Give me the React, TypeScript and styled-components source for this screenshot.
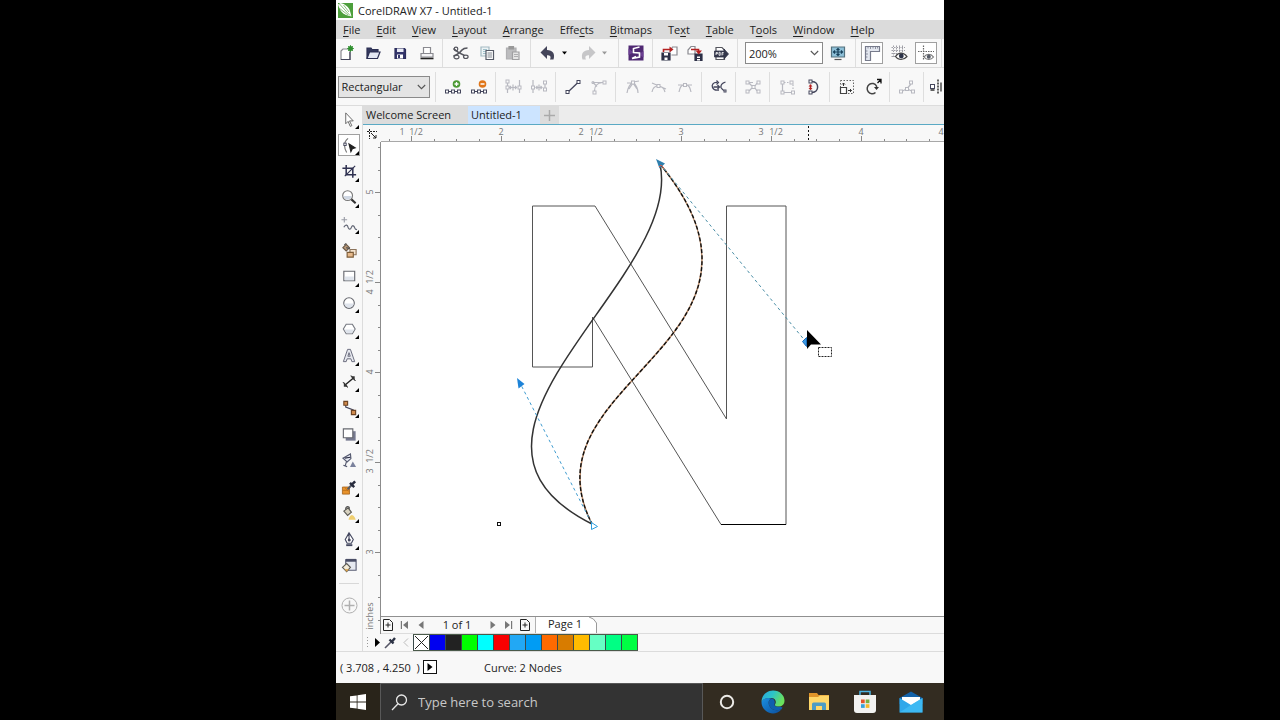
import React from "react";
import styled, { createGlobalStyle } from "styled-components";

const GlobalStyle = createGlobalStyle`
  * { box-sizing: border-box; }
  body {
    margin: 0;
    background: #000;
    font-family: "Open Sans", "Noto Sans", sans-serif;
    font-size: 11px;
    color: #222;
  }
  button, input, select { font: inherit; color: inherit; margin: 0; }
`;

const Stage = styled.div`
  display: flex;
  justify-content: center;
  min-height: 100vh;
  background: #000;
`;

const Screen = styled.main`
  display: flex;
  flex-direction: column;
  width: 47.5%;
  background: #f8f8f8;
  overflow: hidden;
`;

const TitleBar = styled.header`
  display: flex;
  align-items: center;
  gap: 5px;
  height: 20px;
  padding-left: 2px;
  background: #fff;
  white-space: nowrap;
`;

const MenuBar = styled.nav`
  display: flex;
  align-items: center;
  gap: 16px;
  height: 19px;
  padding-left: 7px;
  background: #dbdbdb;
`;

const MenuItem = styled.button`
  flex: none;
  padding: 0;
  border: 0;
  background: none;
  line-height: 16px;
  u { text-underline-offset: 2px; }
`;

const Toolbar = styled.div<{ $height: number }>`
  display: flex;
  align-items: center;
  height: ${(p) => p.$height}px;
  border-bottom: 1px solid #dcdcdc;
  background: #f8f8f8;
  overflow: hidden;
`;

const Group = styled.div<{ $width: number; $gap?: number; $end?: number }>`
  display: flex;
  flex: none;
  align-items: center;
  justify-content: center;
  gap: ${(p) => p.$gap ?? 6}px;
  width: ${(p) => p.$width}px;
  height: 30px;
  padding-right: ${(p) => p.$end ?? 0}px;
  border-right: 1px solid #dedede;
`;

const ToolButton = styled.button<{ $boxed?: boolean; $width?: number; $faded?: boolean }>`
  display: flex;
  flex: none;
  align-items: center;
  justify-content: center;
  width: ${(p) => p.$width ?? 20}px;
  height: 22px;
  padding: 0;
  border: 1px solid ${(p) => (p.$boxed ? "#a0a0a0" : "transparent")};
  background: ${(p) => (p.$boxed ? "#fff" : "none")};
  opacity: ${(p) => (p.$faded ? 0.35 : 1)};
  svg { flex: none; display: block; }
`;

const Split = styled.div`
  display: flex;
`;

const SelectWrap = styled.label<{ $width: number; $bg: string }>`
  display: flex;
  flex: none;
  align-items: center;
  width: ${(p) => p.$width}px;
  height: 22px;
  padding-right: 3px;
  border: 1px solid #8a8a8a;
  background: ${(p) => p.$bg};
  select {
    flex: 1;
    min-width: 0;
    height: 20px;
    padding: 0 0 0 3px;
    border: 0;
    outline: 0;
    background: none;
    appearance: none;
  }
`;

const Work = styled.div`
  display: flex;
  flex: 1;
  min-height: 0;
`;

const ToolBox = styled.aside`
  flex: none;
  width: 27px;
  border-right: 1px solid #dcdcdc;
`;

const ToolList = styled.div`
  display: grid;
  grid-auto-rows: 1fr;
  align-items: center;
  justify-items: center;
  height: 473px;
`;

const ToolCell = styled.button<{ $active?: boolean }>`
  position: relative;
  display: flex;
  align-items: center;
  justify-content: center;
  width: 22px;
  height: 22px;
  padding: 0;
  border: 1px solid ${(p) => (p.$active ? "#a0a0a0" : "transparent")};
  background: ${(p) => (p.$active ? "#fff" : "none")};
`;

const Flyout = styled.i`
  position: absolute;
  right: 0;
  bottom: 0;
  border: 2px solid transparent;
  border-right-color: #000;
  border-bottom-color: #000;
`;

const AddTool = styled.div`
  display: flex;
  justify-content: center;
  margin: 4px 3px 0;
  padding-top: 13px;
  border-top: 1px solid #d8d8d8;
`;

const Doc = styled.section`
  display: flex;
  flex: 1;
  flex-direction: column;
  min-width: 0;
`;

const Tabs = styled.div`
  display: flex;
  height: 19px;
  background: #ececec;
  border-bottom: 1px solid #5aa9c4;
`;

const Tab = styled.button<{ $width: number; $active?: boolean }>`
  width: ${(p) => p.$width}px;
  padding: 0 0 0 3px;
  border: 0;
  text-align: left;
  line-height: 18px;
  white-space: nowrap;
  background: ${(p) => (p.$active ? "#cce4ff" : "#dcdcdc")};
`;

const NewTab = styled.button`
  display: flex;
  align-items: center;
  justify-content: center;
  width: 19px;
  padding: 0;
  border: 0;
  background: #dcdcdc;
`;

const Board = styled.div`
  display: grid;
  flex: 1;
  grid-template-columns: 18px 1fr;
  grid-template-rows: 17px 1fr;
  min-height: 0;
`;

const Corner = styled.div`
  display: flex;
  align-items: center;
  justify-content: center;
`;

const RulerTop = styled.div`
  min-width: 0;
  overflow: hidden;
  border-bottom: 1px solid #a8a8a8;
  svg { display: block; }
`;

const RulerSide = styled.div`
  overflow: hidden;
  border-right: 1px solid #8c8c8c;
  svg { display: block; }
`;

const CanvasColumn = styled.div`
  display: flex;
  flex-direction: column;
  min-width: 0;
`;

const Canvas = styled.div`
  flex: 1;
  background: #fff;
  overflow: hidden;
  svg { display: block; }
`;

const PageNav = styled.div`
  display: flex;
  height: 18px;
  border-top: 1px solid #909090;
  border-bottom: 1px solid #dcdcdc;
`;

const NavButton = styled.button<{ $width: number }>`
  display: flex;
  flex: none;
  align-items: center;
  justify-content: center;
  width: ${(p) => p.$width}px;
  padding: 0;
  border: 0;
  background: none;
`;

const PageCount = styled.span`
  width: 56px;
  text-align: center;
  line-height: 16px;
`;

const PageTab = styled.button`
  display: flex;
  align-items: stretch;
  justify-content: space-between;
  width: 62px;
  margin-left: 2px;
  padding: 0 0 0 12px;
  border: 0;
  border-left: 1px solid #b0b0b0;
  background: #fff;
  line-height: 13px;
  white-space: nowrap;
`;

const Palette = styled.div`
  display: flex;
  align-items: center;
  height: 17px;
`;

const Swatches = styled.div`
  display: flex;
  border: 1px solid #4a5a4a;
  border-left: 0;
`;

const Swatch = styled.button<{ $color: string }>`
  display: block;
  width: 16px;
  height: 15px;
  padding: 0;
  border: 0;
  border-left: 1px solid #3a4a4a;
  background: ${(p) => p.$color};
  svg { display: block; }
`;

const StatusBar = styled.footer`
  display: flex;
  align-items: center;
  height: 32px;
  padding: 0 0 1px 4px;
  border-top: 1px solid #dcdcdc;
  white-space: nowrap;
`;

const Coordinates = styled.span`
  width: 83px;
`;

const PlayButton = styled.button`
  display: flex;
  align-items: center;
  justify-content: center;
  width: 14px;
  height: 14px;
  margin-right: 47px;
  padding: 0;
  border: 1px solid #111;
  background: #fff;
`;

const TaskBar = styled.div`
  display: flex;
  flex: none;
  height: 38px;
  background: #332c21;
`;

const StartButton = styled.button`
  display: flex;
  flex: none;
  align-items: center;
  justify-content: center;
  width: 44px;
  padding: 0;
  border: 0;
  background: #29241a;
`;

const SearchBox = styled.label`
  display: flex;
  align-items: center;
  gap: 10px;
  width: 323px;
  margin-right: 1px;
  padding-left: 10px;
  border: 1px solid #585858;
  background: #333;
  input {
    flex: 1;
    min-width: 0;
    padding: 0;
    border: 0;
    outline: 0;
    background: none;
    font-size: 13px;
  }
  input::placeholder { color: #c8c8c8; opacity: 1; }
`;

const TaskButton = styled.button`
  display: flex;
  flex: none;
  align-items: center;
  justify-content: center;
  width: 46px;
  padding: 0;
  border: 0;
  background: none;
`;

const INK = "#44465c";
const GREY = "#8a8a90";

const Icon = ({ size = 18, children }: { size?: number; children: React.ReactNode }) => (
  <svg width={size} height={size} viewBox="0 0 18 18" fill="none" stroke={INK} strokeWidth="1.2" aria-hidden="true">
    {children}
  </svg>
);

const Chevron = ({ color = "#555" }: { color?: string }) => (
  <svg width="9" height="6" viewBox="0 0 9 6" fill="none" stroke={color} strokeWidth="1.1">
    <path d="M.8 1l3.700 3.700L8.200 1" />
  </svg>
);

const node = (x: number, y: number, s = 3) => (
  <rect x={x} y={y} width={s} height={s} fill="#fff" strokeWidth="1" />
);

const icons: Record<string, React.ReactNode> = {
  new: (
    <>
      <path d="M4 7l2-2h7v10.500H4z" fill="#fff" stroke={GREY} />
      <path d="M4 15.500h9V8" stroke={INK} />
      <circle cx="13.500" cy="4.500" r="2.500" fill="#2f8f2f" stroke="none" />
      <path d="M13.500 1v7M10 4.500h7M11 2l5 5M16 2l-5 5" stroke="#2f8f2f" strokeWidth=".8" />
    </>
  ),
  open: (
    <>
      <path d="M3 14.500V4h4l1 1.500h6V8" fill="#34395e" stroke="#2c3054" />
      <path d="M3 14.500L5.500 8H16l-2.500 6.500z" fill="#e4e8f4" stroke="#2c3054" />
    </>
  ),
  save: (
    <>
      <path d="M4 4.500h9.500l1 1V14.500H4z" fill="#34366c" stroke="#2c2e5c" />
      <path d="M6 4.500h6.500V8H6z" fill="#e8eaf4" stroke="none" />
      <path d="M6 10.500h6v4H6z" fill="#fff" stroke="none" />
      <path d="M7 11h2v3H7z" fill="#34366c" stroke="none" />
    </>
  ),
  print: (
    <>
      <path d="M5.500 9V3.500h7V9" fill="#fff" stroke={GREY} />
      <path d="M3 9.500h12V13H3z" fill="#f4f4f6" stroke={GREY} />
      <path d="M2.500 14.500h13" stroke="#222" strokeWidth="1.600" />
    </>
  ),
  cut: (
    <>
      <path d="M1.500 4.500c4 4 6 5 11 7M1.500 12c4-1 6-3 8.500-6 1.500-1.800 3-2 5.500-2" stroke="#55565e" strokeWidth="1.700" />
      <circle cx="4" cy="5" r="1.800" stroke="#55565e" />
      <ellipse cx="4.500" cy="13" rx="2.500" ry="1.800" stroke="#55565e" />
      <ellipse cx="13.800" cy="12.800" rx="2.300" ry="1.700" stroke="#55565e" />
    </>
  ),
  copy: (
    <>
      <path d="M3 3h8v9H3z" fill="#eef4f6" stroke="#a3b9c2" />
      <path d="M5 5.500h4M5 7.500h3M5 9.500h3" stroke="#8cb4c0" strokeWidth=".8" />
      <path d="M8 6.500h7.500v9H8z" fill="#fff" stroke="#555a66" />
      <path d="M9.500 9h4.500M9.500 11h4.500M9.500 13h4.500" stroke="#6f7680" strokeWidth=".9" />
    </>
  ),
  paste: (
    <>
      <path d="M2.500 4H12v11H2.500z" fill="#bcbcbe" stroke="#b0b0b2" />
      <path d="M5 2.500h4.500V5H5z" fill="#999" stroke="#999" />
      <path d="M8.500 8H15v7.500H8.500z" fill="#e6e6e6" stroke="#a0a0a2" />
      <path d="M10 10.500h4M10 12.500h4" stroke="#a0a0a2" strokeWidth=".8" />
    </>
  ),
  undo: (
    <>
      <path d="M7 6c6-.5 9.500 3 7.500 9.500h-3.500c1.500-3.500 0-4.500-4-4.300z" fill="#44455a" stroke="none" />
      <path d="M8 2v13L1.500 8.500z" fill="#44455a" stroke="none" />
    </>
  ),
  redo: (
    <>
      <path d="M11 6C5 5.500 1.500 9 3.500 15.500H7C5.500 12 7 11 11 11.200z" fill="#c6c6c8" stroke="none" />
      <path d="M10 2v13l6.500-6.500z" fill="#c6c6c8" stroke="none" />
    </>
  ),
  connect: (
    <>
      <path d="M1.500 1.500h15v15h-15z" fill="#4f2872" stroke="none" />
      <path d="M1.500 11l5-2.500-5-4zM16.500 7l-5 3.500 5 3z" fill="#6b3f92" stroke="none" />
      <path d="M12.500 3L6.500 4.500v4l6 .500v4L5 14.500M9 12.500l-4 2" stroke="#fff" strokeWidth="1.600" />
    </>
  ),
  import: (
    <>
      <path d="M10 7.500l2.500-4.500h4.500v8h-5.500" fill="#fff" stroke={GREY} />
      <path d="M2 9h8v7H2z" fill="#2d3047" stroke="#2d3047" />
      <path d="M4 9h4v2.500H4zM4.500 13.500h3V16h-3z" fill="#fff" stroke="none" />
      <path d="M3.500 8V5.500h7" stroke="#b42020" strokeWidth="1.600" />
      <path d="M9.500 2.500v6l4-3z" fill="#b42020" stroke="none" />
    </>
  ),
  export: (
    <>
      <path d="M2 10V6L5 2.500h4V10z" fill="#fff" stroke={GREY} />
      <path d="M9 10h7v6.500H9z" fill="#2d3047" stroke="#2d3047" />
      <path d="M11 12.500h3v1.500h-3zM11 15h3v1.500h-3z" fill="#fff" stroke="none" />
      <path d="M5 5.500h7.500V7" stroke="#b42020" strokeWidth="1.600" />
      <path d="M9.500 6.500h6.500L12.700 10.500z" fill="#b42020" stroke="none" />
    </>
  ),
  pdf: (
    <>
      <path d="M4 15.500V3.500h6l2.500 2.500v9.500z" fill="#fff" stroke="#55565e" />
      <path d="M2.500 7H12V5l4.500 5-4.500 5v-2H2.500z" fill="#33364a" stroke="#33364a" strokeWidth=".8" />
      <path d="M4 11V8.500h1.500v1.200H4M7 8.300v3h1.200V8.300zM10 11.500v-3h1.700M10 10h1.500" stroke="#fff" strokeWidth=".8" />
    </>
  ),
  fullscreen: (
    <>
      <path d="M2.500 3h13v10h-13z" fill="#8ec0d8" stroke="#55727f" />
      <path d="M9 4.500v7M4.500 8h9M7.500 6L9 4.500 10.500 6M7.500 10L9 11.500l1.500-1.500M6 6.500L4.500 8 6 9.500M12 6.500L13.500 8 12 9.500" stroke="#17405a" />
      <path d="M5.500 15.500h7" stroke="#555" />
    </>
  ),
  rulers: (
    <>
      <path d="M2.500 2.500h14v5H7.500v9h-5z" fill="#e4e8f0" stroke="#777b8c" />
      <path d="M5 2.500v2M7.500 2.500v2.500M10 2.500v2M12.500 2.500v2.500M14.500 2.500v2M2.500 7h2M2.500 10h2.500M2.500 13h2" stroke="#777b8c" strokeWidth=".8" />
    </>
  ),
  grid: (
    <>
      <path d="M3.500 1.500v12M6.500 1.500v12M9.500 1.500v7M12.500 1.500v7M1.500 3.500H15M1.500 6.500H15M1.500 9.500h6M1.500 12.500h5" stroke="#94949c" strokeWidth=".9" strokeDasharray="1.500 1" />
      <path d="M5.500 12.500c3-4.500 8-4.500 11.500 0-3.500 4-8.500 4-11.500 0z" fill="#fff" stroke="#444" />
      <circle cx="11.300" cy="12" r="2.400" fill="#2c3348" stroke="none" />
    </>
  ),
  guides: (
    <>
      <path d="M6.500 1.500v14M1 7.500h16" stroke="#666" strokeDasharray="1.500 1" />
      <path d="M7 13c2.500-3.500 7-3.500 9.500 0-2.500 3.200-7 3.200-9.500 0z" fill="#fff" stroke="#777" />
      <circle cx="11.800" cy="12.700" r="2" fill="#555a66" stroke="none" />
    </>
  ),
  addNode: (
    <>
      {node(1.5, 12)}{node(7.5, 12)}{node(13.5, 12)}
      <path d="M4.500 13.500h3M10.500 13.500h3" />
      <circle cx="12.500" cy="6" r="3.800" fill="#4d9a35" stroke="none" />
      <path d="M10.500 6h4M12.500 4v4" stroke="#fff" strokeWidth="1.300" />
    </>
  ),
  delNode: (
    <>
      {node(1.5, 12)}{node(7.5, 12)}{node(13.5, 12)}
      <path d="M4.500 13.500h3M10.500 13.500h3" />
      <circle cx="12.500" cy="6" r="3.800" fill="#e0761a" stroke="none" />
      <path d="M10.500 6h4" stroke="#fff" strokeWidth="1.500" />
    </>
  ),
  join: (
    <>
      {node(2, 2)}{node(2, 8)}{node(14, 8)}
      <path d="M3.500 5v3M3.500 11v4M15.500 2v6M15.500 11v4M6 9.500h6M9 6.500v6M7 8l-1.500 1.500L7 11M11 8l1.500 1.500L11 11" />
    </>
  ),
  breakNode: (
    <>
      {node(13.5, 3)}{node(13.5, 10)}{node(1.5, 8)}
      <path d="M3 2v6M3 11v4M15 6v4M5.500 9.500h7M9 6.500v6M7.500 8L6 9.500 7.500 11M10.500 8l1.500 1.500-1.500 1.500" />
    </>
  ),
  toLine: (
    <>
      <path d="M4 14L14 4.500" strokeWidth="1.300" />
      {node(2, 12.5)}{node(13, 2.5)}
    </>
  ),
  toCurve: (
    <>
      <path d="M4.500 13c0-4 2-8 8-8.500M3 4.500h10M3 4.500l4 4" />
      {node(3, 13)}{node(13, 3)}
      <circle cx="3" cy="4.500" r="1" />
    </>
  ),
  cusp: (
    <>
      <path d="M3 15c1-6 3-9 6-11M9 4c3 3 5 6 5 11M3 5h6M9 4l6-1M9 5l-4 6M9 5l4 6" />
      {node(7.5, 3)}
    </>
  ),
  smooth: (
    <>
      <path d="M2 14c1-5 3-6 6-6 4 0 6 2 7 6M2 5l14 6" />
      {node(7, 6.5)}
    </>
  ),
  symmetric: (
    <>
      <path d="M3 14c1-5 2-7 6-7s5 2 6 7M2 7h14" />
      {node(7.500, 5.500)}
    </>
  ),
  reverse: (
    <>
      <path d="M7.500 4.500C3 4 1.500 7 2.500 9.500S6 12.500 9 12M3.500 9h6M7.500 7l2 2-2 2M15.500 4c-3 1-5 3-4.500 5.500 1 2 2.500 3 4 3.500" strokeWidth="1.300" />
      <path d="M6.500 2.500l2 2-2 2" />
      {node(14, 12, 2)}
    </>
  ),
  extract: (
    <>
      {node(2, 3)}{node(2, 12)}{node(13, 3)}{node(13, 12)}{node(8, 7.5)}
      <path d="M5 5l3 3M5 13l3-3M13 5l-2 3M13 13l-2-3M5 4.500h4" />
    </>
  ),
  extend: (
    <>
      {node(3, 3)}{node(3, 13)}{node(13.5, 13)}
      <path d="M4.500 6v7M6 14.500h7.500" />
      <path d="M6 4.500h6M15 6.500v6" strokeDasharray="1.500 1.500" />
      {node(12, 3)}
    </>
  ),
  closeCurve: (
    <>
      <path d="M8 3.500c7.500.500 7.500 10.500 0 11" strokeWidth="1.500" />
      {node(5, 2)}{node(5, 13)}
      <path d="M6.500 6.500v5" stroke="#b42020" strokeWidth="1.500" />
      <path d="M4.500 8.500l2-2 2 2zM4.500 10l2 2 2-2z" fill="#b42020" stroke="none" />
    </>
  ),
  stretch: (
    <>
      <path d="M2.500 2.500h13v13h-13z" stroke="#666" strokeWidth="1" strokeDasharray="1.500 1.500" />
      <path d="M2.500 9.500h6v6h-6z" fill="#fff" stroke="#444" />
      <path d="M5.500 8V5M4 6.500L5.500 5 7 6.500M10 12.500h3.500M12 11l1.500 1.500L12 14" stroke="#333" strokeWidth="1" />
    </>
  ),
  rotate: (
    <>
      <path d="M11.500 14.500A5 5.200 0 1 1 12.500 8v2.500" stroke="#444" strokeWidth="1.500" />
      <path d="M10 9h5l-2.500 3z" fill="#333" stroke="none" />
      <path d="M13 1.500h4v4M13.500 5l3-3" stroke="#111" strokeWidth="1.300" />
    </>
  ),
  align: (
    <>
      {node(1.5, 12)}{node(7.500, 9.500)}{node(13.5, 12)}{node(11.5, 3)}
      <path d="M4.500 13l3-1.500M10.500 11.500l3 1.500M13 6L10 9.500" />
    </>
  ),
  reflect: (
    <>
      {node(1.5, 6.5, 4)}
      <path d="M1.500 12h4" stroke="#222" strokeWidth="1.400" />
      <path d="M9 1.500v15" stroke="#222" strokeWidth="1.400" strokeDasharray="2 1" />
      <path d="M12 4.500v9" stroke="#222" />
    </>
  ),
  pick: <path d="M5 2l8 8.500H9l2.500 5-1.700.8L7.500 11 5 13.500z" fill="#fff" stroke="#666" strokeWidth="1" />,
  shape: (
    <>
      <path d="M7.500 1.500C3 5 2.500 10 6 16.500" stroke="#777" />
      {node(3, 6.500, 2.5)}
      <path d="M8.500 7.500l6.500 4-3 1-1.500 3z" fill="#222" stroke="#222" />
    </>
  ),
  crop: (
    <>
      <path d="M1.500 5.500h11v10M5.500 2v10.500H16" stroke="#2f3150" strokeWidth="1.600" />
      <path d="M4 14L15 3" stroke="#2f3150" />
    </>
  ),
  zoom: (
    <>
      <circle cx="7" cy="7" r="5.200" fill="#fff" stroke="#777" />
      <path d="M2.500 7.500h9c-1 5-8 5-9 0z" fill="#d0d8e4" stroke="none" />
      <path d="M11 11l4.500 4" stroke="#333" strokeWidth="2.200" />
    </>
  ),
  freehand: (
    <>
      <path d="M3.500 1v6M.5 4h6" stroke="#999ca6" />
      <path d="M3 12c2-4 4-2 4.500 0s2.500 3 3.500 0 3-1.500 3.500.500 1 2 2.500 2" stroke="#666a78" strokeWidth="1.300" />
    </>
  ),
  smartFill: (
    <>
      <path d="M2 6l3.500-3.500L9 6 5.500 9.500z" fill="#b89878" stroke="#6b5a48" />
      <path d="M3.500 3l2-1.500M5.500 6l4 1" stroke="#555" />
      <path d="M9.500 8H16v5.500H9.500z" fill="#f4e4d0" stroke="#8c745c" />
      <path d="M6.500 11h6.500v5H6.500z" fill="#e6b98b" stroke="#7c5c38" />
    </>
  ),
  rect: (
    <>
      <path d="M3 3.500h11.500v10H3z" fill="#fff" stroke="#66686f" />
      <path d="M4 9h9.500v4H4z" fill="#dfe4ec" stroke="none" />
    </>
  ),
  ellipse: (
    <>
      <circle cx="8.500" cy="8.500" r="5.600" fill="#fff" stroke="#66686f" />
      <path d="M3.500 9h10c-.5 6-9.500 6-10 0z" fill="#dfe4ec" stroke="none" />
    </>
  ),
  polygon: (
    <>
      <path d="M5.500 3.500h6.500l3 5-3 5H5.500l-3-5z" fill="#fff" stroke="#777a82" />
      <path d="M3.500 9h10.500l-2.500 4H6z" fill="#dfe4ec" stroke="none" />
    </>
  ),
  text: <path d="M2.500 15.500L7 2.500h3l4.500 13h-3l-1-3h-4l-1 3zM7.300 9.800h2.500L8.500 6z" fill="#e6e8ee" stroke="#66687a" strokeWidth="1" />,
  dimension: (
    <>
      <path d="M4 13L13.500 5" stroke="#222" strokeWidth="1.500" />
      <path d="M3 9.500l4.500 5H3zM10 3.500l4.500 5v-5z" fill="#333" stroke="none" />
      <path d="M2 9.500l5 6M10.500 2.500l5 6" stroke="#333" strokeWidth="1" />
    </>
  ),
  connector: (
    <>
      <path d="M5 4v3.500l8 3V13" />
      <path d="M3 1.500h4v4H3zM11 11h4.500v4.500H11z" fill="#d08a4c" stroke="#6d4424" />
    </>
  ),
  shadow: (
    <>
      <path d="M5 5.500h10.500v10H5z" fill="#777a90" stroke="none" />
      <path d="M2.500 3h10v9.500h-10z" fill="#fff" stroke="#66686f" />
    </>
  ),
  transparency: (
    <>
      <path d="M2 6.500L10 2l.5 5-4 3.500zM6 9.500l-1.500 5M2.500 14l4 1.500" fill="#e8ebf4" stroke="#555a70" />
      <path d="M4 6.500l6-1" stroke="#2d3047" />
      <path d="M9.500 16l3-6 3.500 6z" fill="#7a819c" stroke="none" />
    </>
  ),
  dropper: (
    <>
      <path d="M1.500 8.500h7.500v7.500H1.500z" fill="#e8932c" stroke="#a05d14" strokeWidth=".8" />
      <path d="M4 9l4 4M2 12h6" stroke="#b66a14" strokeWidth=".8" />
      <path d="M7 11l5-5.500" stroke="#555a66" strokeWidth="2.200" />
      <path d="M9.500 4l4.500 4.500M12 5.500l3-3" stroke="#272b3d" strokeWidth="2.600" />
    </>
  ),
  fill: (
    <>
      <path d="M3 6.500L7.500 3l3.500 4.500L7 11z" fill="#d8d2c0" stroke="#5b5a54" />
      <path d="M5 5c-.5-4 4-4.500 4-1" stroke="#555" />
      <path d="M8 15.500c0-1.500 2-5 3.500-5s4 3.500 4 5z" fill="#f0cf70" stroke="none" />
    </>
  ),
  outline: (
    <>
      <path d="M8.500 2L4.500 9l2 4h4.500l2-4zM8.500 2v7.500" fill="#fff" stroke="#444860" />
      <circle cx="8.700" cy="9.500" r="1" fill="#444860" />
      <path d="M5.500 15h6.500" stroke="#444860" strokeWidth="2" />
    </>
  ),
  editFill: (
    <>
      <path d="M5 3h11v11H5z" fill="#e6e9f0" stroke="#5a5e74" />
      <path d="M5 3.500h11" stroke="#4a4e66" strokeWidth="3" />
      <path d="M1.500 11l4.500-4 4 4-4 4.500z" fill="#f4ecd8" stroke="#5b5a54" />
      <path d="M3.500 13h5L6 15.500z" fill="#d9a24c" stroke="none" />
    </>
  ),
};

type Btn = { id: string; label: string; faded?: boolean; boxed?: boolean };

const b = (id: string, label: string, extra: Partial<Btn> = {}): Btn => ({ id, label, ...extra });

const Buttons = ({ items, width }: { items: Btn[]; width?: number }) => (
  <>
    {items.map((i) => (
      <ToolButton key={i.id} type="button" aria-label={i.label} title={i.label} $faded={i.faded} $boxed={i.boxed} $width={width}>
        <Icon>{icons[i.id]}</Icon>
      </ToolButton>
    ))}
  </>
);

const DropArrow = ({ color, label }: { color: string; label: string }) => (
  <ToolButton type="button" aria-label={label} $width={14}>
    <svg width="5" height="4" viewBox="0 0 5 4"><path d="M0 .5h5L2.500 3.500z" fill={color} /></svg>
  </ToolButton>
);

const menus: [string, string, string][] = [
  ["", "F", "ile"], ["", "E", "dit"], ["", "V", "iew"], ["", "L", "ayout"], ["", "A", "rrange"],
  ["Effe", "c", "ts"], ["", "B", "itmaps"], ["Te", "x", "t"], ["", "T", "able"], ["T", "o", "ols"],
  ["", "W", "indow"], ["", "H", "elp"],
];

const nodeGroups: { width: number; items: Btn[] }[] = [
  { width: 60, items: [b("addNode", "Add nodes"), b("delNode", "Delete nodes")] },
  { width: 60, items: [b("join", "Join two nodes", { faded: true }), b("breakNode", "Break curve", { faded: true })] },
  { width: 60, items: [b("toLine", "Convert to line"), b("toCurve", "Convert to curve", { faded: true })] },
  { width: 86, items: [b("cusp", "Cusp node", { faded: true }), b("smooth", "Smooth node", { faded: true }), b("symmetric", "Symmetrical node", { faded: true })] },
  { width: 34, items: [b("reverse", "Reverse direction")] },
  { width: 34, items: [b("extract", "Extract subpath", { faded: true })] },
  { width: 60, items: [b("extend", "Extend curve to close", { faded: true }), b("closeCurve", "Close curve")] },
  { width: 60, items: [b("stretch", "Stretch and scale nodes"), b("rotate", "Rotate and skew nodes")] },
  { width: 34, items: [b("align", "Align nodes", { faded: true })] },
  { width: 28, items: [b("reflect", "Reflect nodes horizontally")] },
];

const tools: [string, string, boolean][] = [
  ["pick", "Pick", true], ["shape", "Shape", true], ["crop", "Crop", true], ["zoom", "Zoom", true],
  ["freehand", "Freehand", true], ["smartFill", "Smart fill", false], ["rect", "Rectangle", true],
  ["ellipse", "Ellipse", true], ["polygon", "Polygon", true], ["text", "Text", true],
  ["dimension", "Dimension", true], ["connector", "Connector", true], ["shadow", "Drop shadow", true],
  ["transparency", "Transparency", false], ["dropper", "Color eyedropper", true],
  ["fill", "Interactive fill", true], ["outline", "Outline pen", true], ["editFill", "Edit fill", false],
];

const swatches = [
  "#0000f0", "#222222", "#00ff00", "#00ffff", "#f80000", "#22a8f4", "#009cf4",
  "#ff6a00", "#d87c00", "#ffbb00", "#66ffc4", "#00ff84", "#00ff44",
];

const INCH = 180;
const rulerText = { fontSize: 9, fill: "#777", fontFamily: '"Open Sans", sans-serif' };

const topLabels: [number, string][] = [
  [21, "1"], [35, "1/2"], [120, "2"], [200, "2"], [215, "1/2"], [300, "3"],
  [380, "3"], [395, "1/2"], [480, "4"], [560, "4"],
];

const sideLabels: [number, string][] = [
  [50, "5"], [135, "1/2"], [150, "4"], [230, "4"], [314, "1/2"], [329, "3"], [410, "3"], [474, "inches"],
];

const HorizontalRuler = () => {
  const twoInches = 120;
  return (
    <svg width="100%" height="16">
      {Array.from({ length: 90 }, (_, i) => {
        const x = Math.round(twoInches + ((i - 5) * INCH) / 8);
        const half = (i - 5) % 4 === 0;
        return <path key={i} d={`M${x + 0.5} ${half ? 11 : 14}V16`} stroke="#888" />;
      })}
      {topLabels.map(([x, s]) => (
        <text key={x} x={x} y="10" textAnchor="middle" {...rulerText}>{s}</text>
      ))}
      <path d="M427.500 1V16" stroke="#111" strokeDasharray="2 2" />
    </svg>
  );
};

const VerticalRuler = () => {
  const fiveInches = 50;
  return (
    <svg width="17" height="491">
      {Array.from({ length: 22 }, (_, i) => {
        const y = Math.round(fiveInches + ((i - 2) * INCH) / 8);
        const half = (i - 2) % 4 === 0;
        return <path key={i} d={`M${half ? 12 : 15} ${y + 0.5}H17`} stroke="#888" />;
      })}
      {sideLabels.map(([y, s]) => (
        <text key={y} transform={`translate(10 ${y}) rotate(-90)`} textAnchor="middle" {...rulerText}>{s}</text>
      ))}
    </svg>
  );
};

const Drawing = () => (
  <svg width="100%" height="100%" viewBox="381 142 563 474" preserveAspectRatio="xMinYMin slice" fill="none">
    <path d="M532.500 206H595L726.500 419V206H786V524.500H721L592.500 317V367H532.500z" stroke="#555" />
    <path d="M721 524.500H786" stroke="#000" />
    <path d="M660 164C685 280 415 435 592 524" stroke="#333" strokeWidth="1.500" />
    <path d="M660 164C806 342 519 381 592 524" stroke="#b98a68" strokeWidth="1.500" />
    <path d="M660 164C806 342 519 381 592 524" stroke="#111" strokeWidth="1.400" strokeDasharray="4 2" />
    <path d="M660 164L806 342" stroke="#4a8ea6" strokeDasharray="3 3" />
    <path d="M519 381L592 524" stroke="#3f9cd0" strokeDasharray="3 3" />
    <path d="M656 159l9 4.500-5.500 5z" fill="#2f7fae" />
    <path d="M659 167l2-2 3 3" stroke="#d05a4a" />
    <path d="M517 378l7.500 6-6 4.500z" fill="#1d83d8" />
    <path d="M591.500 522.500v7l6-3z" fill="#fff" stroke="#2d9fe0" />
    <path d="M802.500 341.500l4-4v9z" fill="#3a9ae6" stroke="#1d6cb8" />
    <path d="M807 330v19l4-4.500h10z" fill="#000" />
    <rect x="818.500" y="347.500" width="13" height="9" stroke="#222" strokeDasharray="2 1" />
    <rect x="497.500" y="522.500" width="3" height="3" fill="#fff" stroke="#111" />
  </svg>
);

const AddPage = () => (
  <svg width="10" height="12" viewBox="0 0 10 12" fill="none" stroke="#222">
    <path d="M.5.5h6L9.500 3.500v8H.5zM5 3.500v5M2.500 6h5" />
  </svg>
);

const Step = ({ back, bar }: { back?: boolean; bar?: boolean }) => (
  <svg width="8" height="8" viewBox="0 0 8 8" fill="#777">
    <g transform={back ? "matrix(-1 0 0 1 8 0)" : undefined}>
      <path d={bar ? "M0 0l5 4-5 4zM6 0h1.200v8H6z" : "M1.500 0l5 4-5 4z"} />
    </g>
  </svg>
);

export default function App() {
  return (
    <Stage>
      <GlobalStyle />
      <Screen>
        <TitleBar>
          <svg width="15" height="15" viewBox="0 0 15 15">
            <path d="M0 0h15v15H0z" fill="#4d9f3c" />
            <path d="M0 1.500L2.500 0C7 1 11 4 12 8l1.500 5.500L8 12C4 10.500 1.500 7 0 1.500z" fill="#fff" />
            <path d="M1.500 1L12 12.500M5.500 2L11 9M1 5l9 7" stroke="#6fb35e" strokeWidth=".8" />
          </svg>
          <span>CorelDRAW X7 - Untitled-1</span>
        </TitleBar>

        <MenuBar aria-label="Main menu">
          {menus.map(([pre, key, post]) => (
            <MenuItem key={pre + key + post} type="button">{pre}<u>{key}</u>{post}</MenuItem>
          ))}
        </MenuBar>

        <Toolbar $height={29}>
          <Group $width={107} $gap={7} $end={5}>
            <Buttons items={[b("new", "New"), b("open", "Open"), b("save", "Save"), b("print", "Print")]} />
          </Group>
          <Group $width={88}>
            <Buttons items={[b("cut", "Cut"), b("copy", "Copy"), b("paste", "Paste")]} />
          </Group>
          <Group $width={88}>
            <Split>
              <Buttons items={[b("undo", "Undo")]} />
              <DropArrow color="#000" label="Undo list" />
            </Split>
            <Split>
              <Buttons items={[b("redo", "Redo")]} />
              <DropArrow color="#999" label="Redo list" />
            </Split>
          </Group>
          <Group $width={34}><Buttons items={[b("connect", "Search content")]} /></Group>
          <Group $width={85}>
            <Buttons items={[b("import", "Import"), b("export", "Export"), b("pdf", "Publish to PDF")]} />
          </Group>
          <Group $width={118} $gap={5}>
            <SelectWrap $width={78} $bg="#fff">
              <select aria-label="Zoom level" defaultValue="200%"><option>200%</option></select>
              <Chevron />
            </SelectWrap>
            <Buttons items={[b("fullscreen", "Full-screen preview")]} />
          </Group>
          <Group $width={86} $gap={5}>
            <Buttons
              width={22}
              items={[b("rulers", "Show rulers", { boxed: true }), b("grid", "Show grid"), b("guides", "Show guidelines", { boxed: true })]}
            />
          </Group>
        </Toolbar>

        <Toolbar $height={38}>
          <Group $width={100} $end={4}>
            <SelectWrap $width={92} $bg="#e4e4e4">
              <select aria-label="Selection mode" defaultValue="Rectangular"><option>Rectangular</option></select>
              <Chevron />
            </SelectWrap>
          </Group>
          {nodeGroups.map((g) => (
            <Group key={g.items[0].id} $width={g.width}><Buttons items={g.items} /></Group>
          ))}
        </Toolbar>

        <Work>
          <ToolBox aria-label="Toolbox">
            <ToolList>
              {tools.map(([id, label, more]) => (
                <ToolCell key={id} type="button" aria-label={label} title={label} $active={id === "shape"}>
                  <Icon size={17}>{icons[id]}</Icon>
                  {more && <Flyout />}
                </ToolCell>
              ))}
            </ToolList>
            <AddTool>
              <NavButton type="button" aria-label="Quick customize" $width={18}>
                <svg width="17" height="17" viewBox="0 0 17 17" fill="none" stroke="#b0b0b0">
                  <circle cx="8.500" cy="8.500" r="7.500" />
                  <path d="M8.500 3.500v10M3.500 8.500h10" strokeWidth="1.500" />
                </svg>
              </NavButton>
            </AddTool>
          </ToolBox>

          <Doc>
            <Tabs>
              <Tab type="button" $width={105}>Welcome Screen</Tab>
              <Tab type="button" $width={72} $active>Untitled-1</Tab>
              <NewTab type="button" aria-label="New document">
                <svg width="11" height="11" viewBox="0 0 11 11" stroke="#aaa" strokeWidth="1.500"><path d="M5.500 0v11M0 5.500h11" /></svg>
              </NewTab>
            </Tabs>
            <Board>
              <Corner>
                <svg width="12" height="12" viewBox="0 0 12 12" fill="none" stroke="#222">
                  <path d="M1 3.500h10M3.500 1v10" strokeDasharray="2 1" />
                  <path d="M5 5l5 5M10 7v3H7" />
                </svg>
              </Corner>
              <RulerTop><HorizontalRuler /></RulerTop>
              <RulerSide><VerticalRuler /></RulerSide>
              <CanvasColumn>
                <Canvas><Drawing /></Canvas>
                <PageNav>
                  <NavButton type="button" aria-label="Add page before" $width={14}><AddPage /></NavButton>
                  <NavButton type="button" aria-label="First page" $width={18}><Step back bar /></NavButton>
                  <NavButton type="button" aria-label="Previous page" $width={16}><Step back /></NavButton>
                  <PageCount>1 of 1</PageCount>
                  <NavButton type="button" aria-label="Next page" $width={16}><Step /></NavButton>
                  <NavButton type="button" aria-label="Last page" $width={16}><Step bar /></NavButton>
                  <NavButton type="button" aria-label="Add page after" $width={16}><AddPage /></NavButton>
                  <PageTab type="button">
                    Page 1
                    <svg width="9" height="16" viewBox="0 0 9 16">
                      <path d="M1 0q5 1 7.500 6v10H9V0z" fill="#f8f8f8" />
                      <path d="M1 0q5 1 7.500 6v10" fill="none" stroke="#999" />
                    </svg>
                  </PageTab>
                </PageNav>
              </CanvasColumn>
            </Board>
            <Palette>
              <NavButton type="button" aria-label="Palette options" $width={20}>
                <svg width="15" height="11" viewBox="0 0 15 11">
                  <path d="M1.500 0v11" stroke="#999" strokeDasharray="1 2" />
                  <path d="M9 1l5 4.500L9 10z" fill="#000" />
                </svg>
              </NavButton>
              <NavButton type="button" aria-label="Eyedropper" $width={15}>
                <svg width="13" height="13" viewBox="0 0 13 13" fill="none">
                  <path d="M1 12l6.500-6.500" stroke="#556" strokeWidth="1.600" />
                  <path d="M5.500 3.500l4 4M8.500 5l2.500-3" stroke="#2c3244" strokeWidth="2.400" />
                </svg>
              </NavButton>
              <NavButton type="button" aria-label="Scroll palette" $width={15}>
                <svg width="6" height="9" viewBox="0 0 6 9" fill="none" stroke="#bbb"><path d="M5 .5l-4 4 4 4" /></svg>
              </NavButton>
              <Swatches>
                <Swatch type="button" aria-label="No color" $color="#fff">
                  <svg width="15" height="15" viewBox="0 0 15 15" stroke="#222"><path d="M1 1l13 13M14 1L1 14" /></svg>
                </Swatch>
                {swatches.map((c) => <Swatch key={c} type="button" aria-label={c} $color={c} />)}
              </Swatches>
            </Palette>
          </Doc>
        </Work>

        <StatusBar>
          <Coordinates>( 3.708 , 4.250&nbsp; )</Coordinates>
          <PlayButton type="button" aria-label="Status options">
            <svg width="6" height="8" viewBox="0 0 6 8"><path d="M.5 0L5.500 4 .5 8z" fill="#000" /></svg>
          </PlayButton>
          <span>Curve: 2 Nodes</span>
        </StatusBar>

        <TaskBar>
          <StartButton type="button" aria-label="Start">
            <svg width="16" height="16" viewBox="0 0 16 16" fill="#fff">
              <path d="M0 2.300l6.700-.9v6.200H0zM7.500 1.300L16 0v7.600H7.500zM0 8.400h6.700v6.200L0 13.700zM7.500 8.400H16V16l-8.500-1.300z" />
            </svg>
          </StartButton>
          <SearchBox>
            <svg width="17" height="17" viewBox="0 0 17 17" fill="none" stroke="#e8e8e8" strokeWidth="1.300">
              <circle cx="10.500" cy="6" r="5" />
              <path d="M7 9.800L1 16" />
            </svg>
            <input type="text" aria-label="Search" placeholder="Type here to search" />
          </SearchBox>
          <TaskButton type="button" aria-label="Cortana">
            <svg width="16" height="16" viewBox="0 0 16 16"><circle cx="8" cy="8" r="6.200" fill="none" stroke="#eceae6" strokeWidth="2" /></svg>
          </TaskButton>
          <TaskButton type="button" aria-label="Edge">
            <svg width="24" height="24" viewBox="0 0 24 24">
              <defs>
                <linearGradient id="edgeTop" x1="0" y1="0" x2="1" y2=".4">
                  <stop offset="0" stopColor="#2aa4e0" /><stop offset=".5" stopColor="#2cc4c8" /><stop offset="1" stopColor="#6be05c" />
                </linearGradient>
                <linearGradient id="edgeLow" x1="0" y1="0" x2="1" y2="1">
                  <stop offset="0" stopColor="#1b8fe0" /><stop offset="1" stopColor="#0b4f9e" />
                </linearGradient>
              </defs>
              <path d="M.5 12C.5 5 6 .5 12 .5c7 0 11.500 5 11.500 10 0 4-2.700 6-6 6-2.500 0-4-1-3.500-2 1.500-2 1-6-3-6.500C6 7.500 2 9 .5 12z" fill="url(#edgeTop)" />
              <path d="M.5 12C2 8.500 6.500 7 10.500 8.500 7.500 9.500 7 13 8.500 16c2 4 7 5.500 12 3.300C18 22.500 15 23.500 12 23.500 5.500 23.500.5 18 .5 12z" fill="url(#edgeLow)" />
              <path d="M8.500 16C6.500 12.500 8 9.500 11 8.300c2.500 1 3.500 3.500 2.500 6-.5 2 2 3.200 5.500 2.200l2.500 1c-.4.800-.7 1.400-1 1.800-5 2.200-10 .7-12-3.300z" fill="#0f5fae" />
            </svg>
          </TaskButton>
          <TaskButton type="button" aria-label="File Explorer">
            <svg width="22" height="20" viewBox="0 0 22 20">
              <path d="M1 1h8l1.500 2H21v15H1z" fill="#e0952a" />
              <path d="M1 5h9l2-1.500h9V18H1z" fill="#ffd768" />
              <path d="M4 18v-6q0-1.500 1.500-1.500h11q1.500 0 1.500 1.500v6h-4v-4H8v4z" fill="#4c9cc4" />
            </svg>
          </TaskButton>
          <TaskButton type="button" aria-label="Microsoft Store">
            <svg width="22" height="24" viewBox="0 0 22 24">
              <path d="M6 5V1.500h10V5" fill="none" stroke="#4cb4e4" strokeWidth="1.500" />
              <path d="M0 5h22v15q0 3-3 3H3q-3 0-3-3z" fill="#f2f2f0" />
              <path d="M7 9.500h3.700v3.700H7z" fill="#e2552c" /><path d="M11.700 9.500h3.700v3.700h-3.700z" fill="#76b043" />
              <path d="M7 14.200h3.700v3.700H7z" fill="#35a2dc" /><path d="M11.700 14.200h3.700v3.700h-3.700z" fill="#f4b92c" />
            </svg>
          </TaskButton>
          <TaskButton type="button" aria-label="Mail">
            <svg width="24" height="22" viewBox="0 0 24 22">
              <path d="M.5 7L12 .5 23.500 7v6H.5z" fill="#1462a8" />
              <path d="M3 6h18v8H3z" fill="#fff" />
              <path d="M.5 7L12 14 23.500 7v14.500H.5z" fill="#2fa8ea" />
              <path d="M.5 21.500L12 14l11.500-7v14.500z" fill="#48c4f8" opacity=".6" />
            </svg>
          </TaskButton>
        </TaskBar>
      </Screen>
    </Stage>
  );
}
